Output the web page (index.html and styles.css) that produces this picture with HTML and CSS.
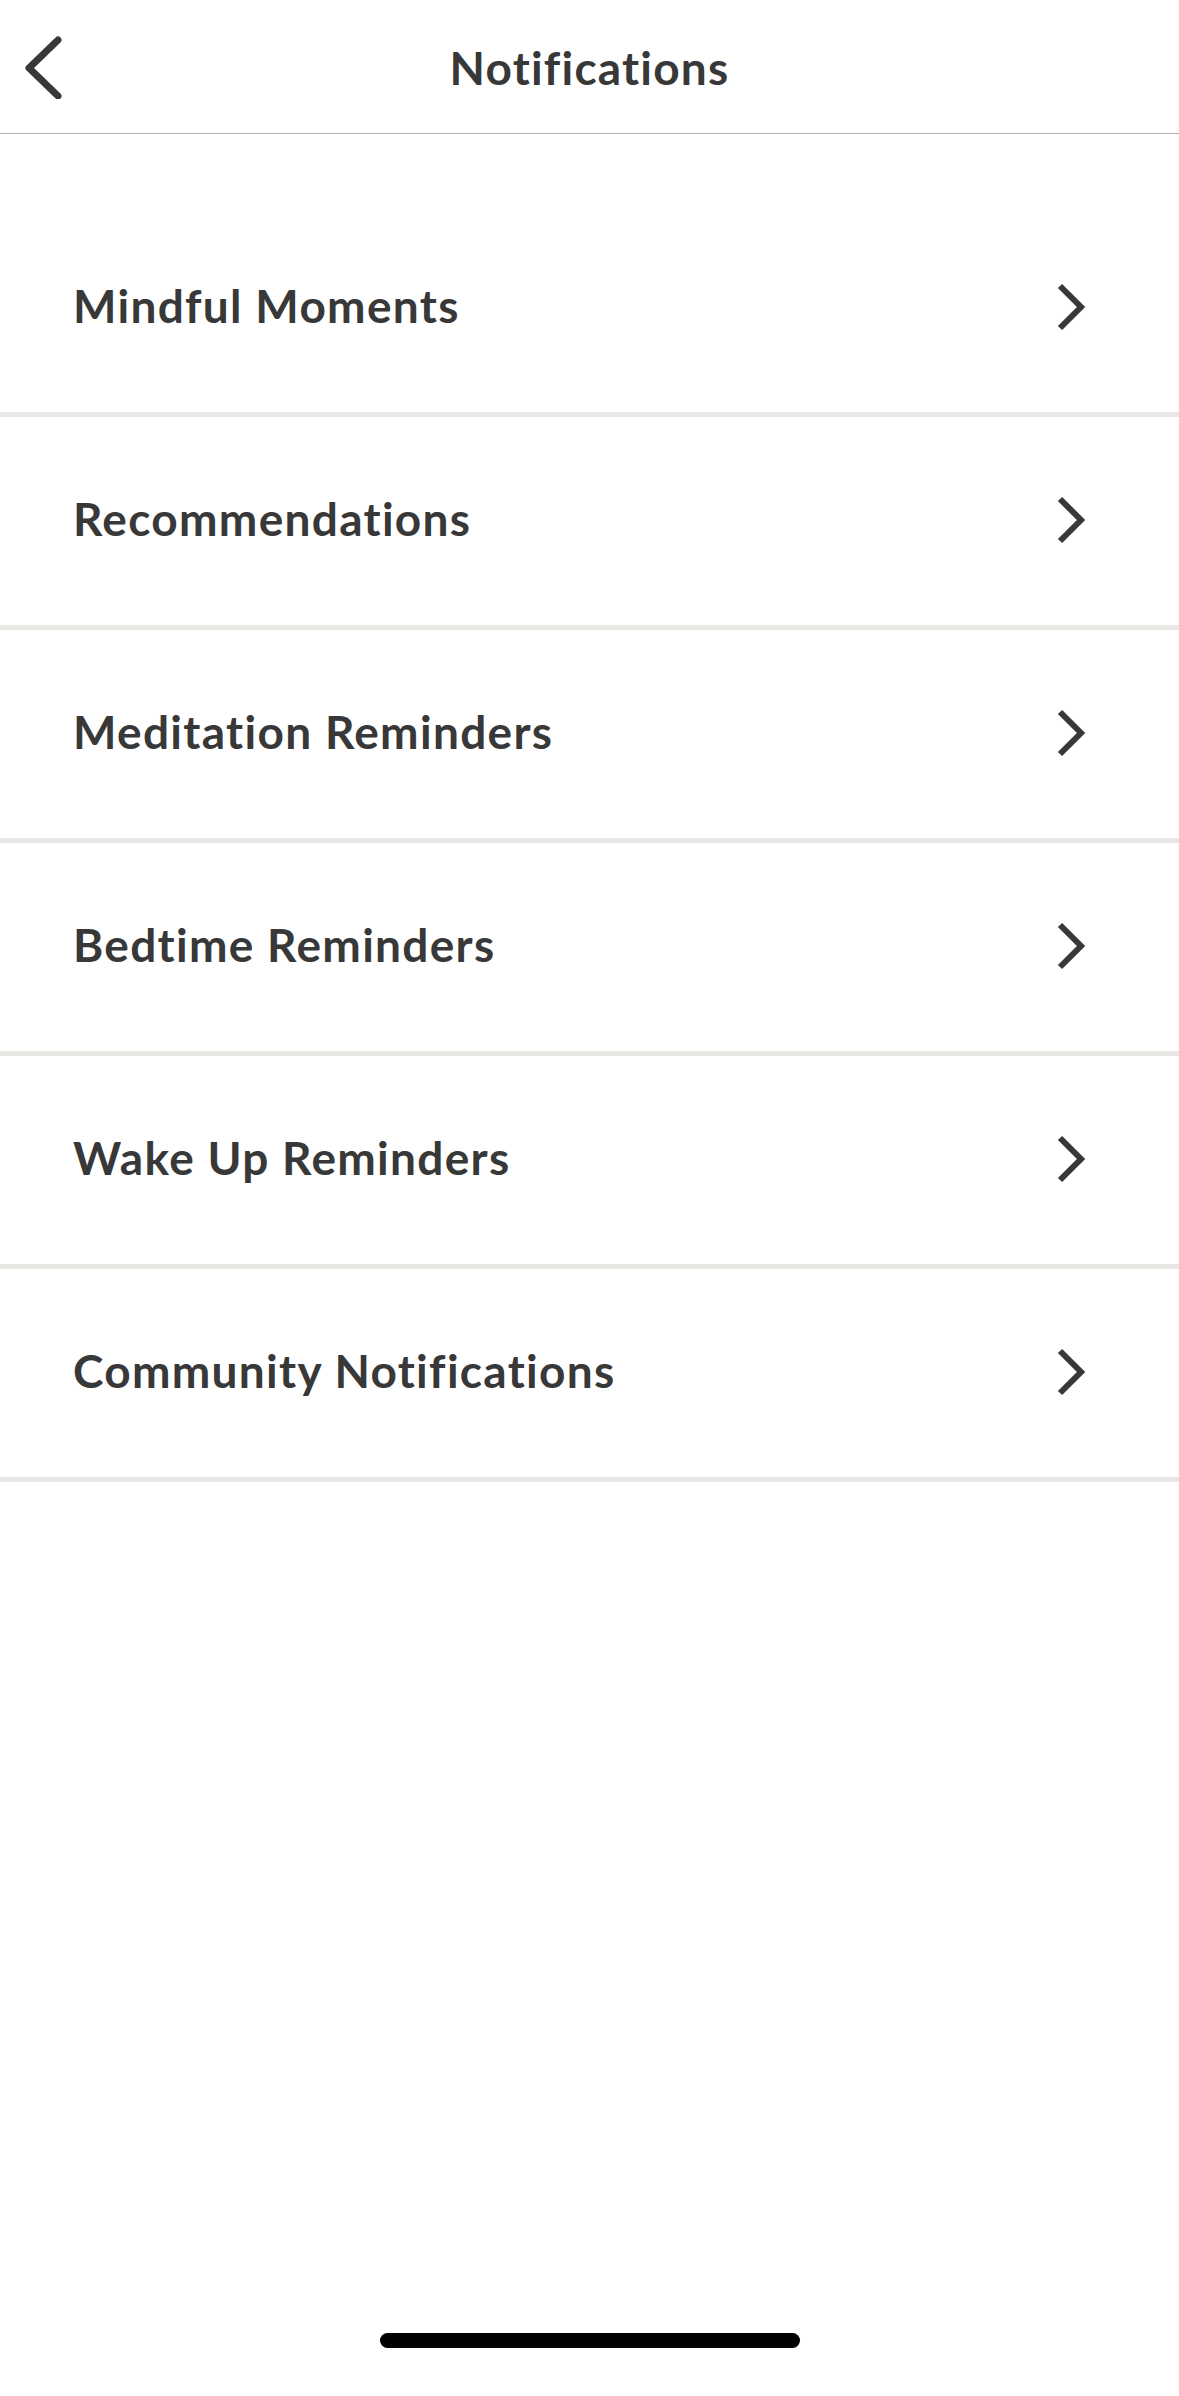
FILE: index.html
```html
<!DOCTYPE html>
<html>
<head>
<meta charset="utf-8">
<link rel="stylesheet" href="styles.css">
</head>
<body>
<div class="screen">
  <header class="topbar">
    <button class="back" aria-label="Back">
      <svg width="40" height="64" viewBox="0 0 40 64"><polyline points="34,5 5,33 34,61" fill="none" stroke="#383838" stroke-width="7" stroke-linecap="round" stroke-linejoin="round"/></svg>
    </button>
    <h1 class="title">Notifications</h1>
  </header>
  <div class="spacer"></div>
  <ul class="list">
    <li class="row"><span class="label">Mindful Moments</span><svg class="chev" width="30" height="50" viewBox="0 0 30 50"><polyline points="4,3 25,24 4,45" fill="none" stroke="#383838" stroke-width="6"/></svg></li>
    <li class="row"><span class="label">Recommendations</span><svg class="chev" width="30" height="50" viewBox="0 0 30 50"><polyline points="4,3 25,24 4,45" fill="none" stroke="#383838" stroke-width="6"/></svg></li>
    <li class="row"><span class="label">Meditation Reminders</span><svg class="chev" width="30" height="50" viewBox="0 0 30 50"><polyline points="4,3 25,24 4,45" fill="none" stroke="#383838" stroke-width="6"/></svg></li>
    <li class="row"><span class="label">Bedtime Reminders</span><svg class="chev" width="30" height="50" viewBox="0 0 30 50"><polyline points="4,3 25,24 4,45" fill="none" stroke="#383838" stroke-width="6"/></svg></li>
    <li class="row"><span class="label">Wake Up Reminders</span><svg class="chev" width="30" height="50" viewBox="0 0 30 50"><polyline points="4,3 25,24 4,45" fill="none" stroke="#383838" stroke-width="6"/></svg></li>
    <li class="row"><span class="label">Community Notifications</span><svg class="chev" width="30" height="50" viewBox="0 0 30 50"><polyline points="4,3 25,24 4,45" fill="none" stroke="#383838" stroke-width="6"/></svg></li>
  </ul>
  <div class="fill"></div>
  <div class="home-area"><div class="home-bar"></div></div>
</div>
</body>
</html>
```
FILE: styles.css
```css
* { box-sizing: border-box; }
html, body { margin: 0; padding: 0; background: #fff; }
body { font-family: "Lato", "Noto Sans", sans-serif; color: #383838; }
.screen { width: 1179px; height: 2396px; display: flex; flex-direction: column; }
.topbar {
  height: 134px;
  border-bottom: 1px solid #b0b0b0;
  display: flex;
  align-items: center;
  justify-content: center;
  position: relative;
}
.back {
  position: absolute;
  left: 24px;
  top: 35px;
  background: none;
  border: 0;
  padding: 0;
  width: 40px;
  height: 64px;
  display: flex;
}
.title {
  margin: 0;
  font-size: 46px;
  font-weight: 700;
  letter-spacing: 1.2px;
  font-variant-ligatures: none;
  padding-top: 2px;
}
.spacer { height: 70px; }
.list { list-style: none; margin: 0; padding: 0; }
.row {
  height: 213px;
  border-bottom: 5px solid #e9e7e4;
  display: flex;
  align-items: center;
  justify-content: space-between;
  padding: 0 93px 6px 73px;
}
.label {
  font-size: 46px;
  font-weight: 700;
  letter-spacing: 1.3px;
  font-variant-ligatures: none;
}
.chev { display: block; margin-top: 6px; }
.fill { flex: 1; }
.home-area { height: 63px; display: flex; justify-content: center; }
.home-bar { width: 420px; height: 15px; border-radius: 8px; background: #000; }
```
